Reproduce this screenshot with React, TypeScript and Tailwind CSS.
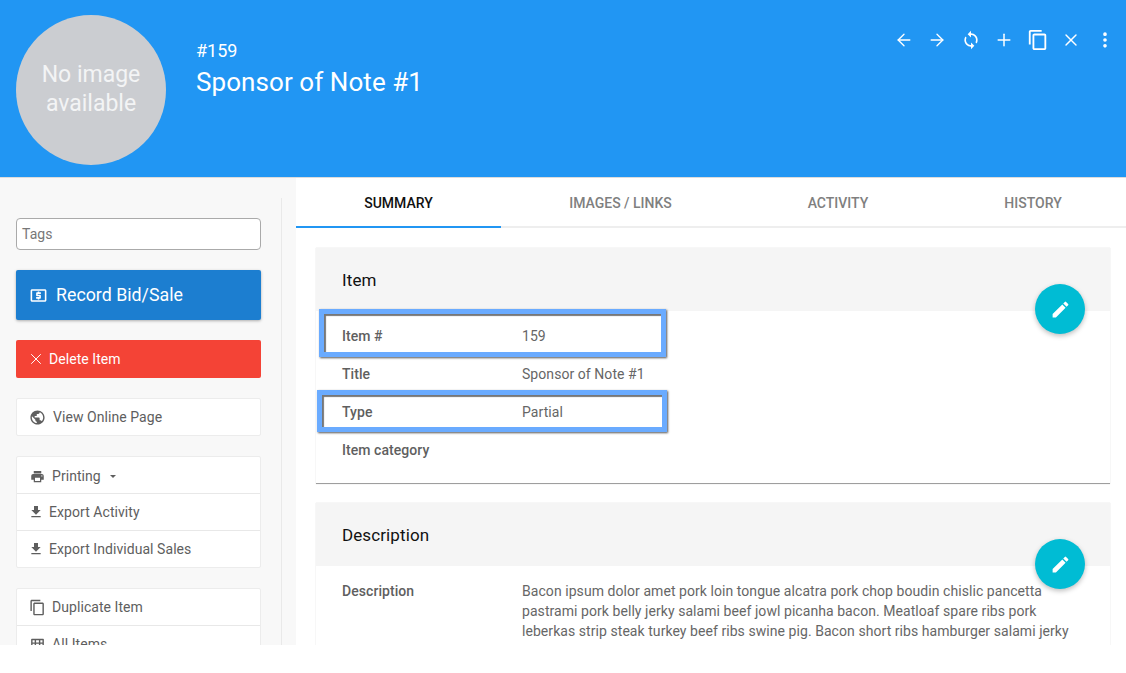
import React from "react";
import { ArrowLeft, ArrowRight, Plus, X, MoreVertical } from "lucide-react";

const M = ({ d, size = 18, className = "" }: { d: string; size?: number; className?: string }) => (
  <svg width={size} height={size} viewBox="0 0 24 24" fill="currentColor" className={className}><path d={d} /></svg>
);
const PENCIL = "M3 17.25V21h3.75L17.81 9.94l-3.75-3.75L3 17.25zM20.71 7.04a1 1 0 0 0 0-1.41l-2.34-2.34a1 1 0 0 0-1.41 0l-1.83 1.83 3.75 3.75 1.83-1.83z";
const COPY = "M16 1H4c-1.1 0-2 .9-2 2v14h2V3h12V1zm3 4H8c-1.1 0-2 .9-2 2v14c0 1.1.9 2 2 2h11c1.1 0 2-.9 2-2V7c0-1.1-.9-2-2-2zm0 16H8V7h11v14z";
const DOWNLOAD = "M19 9h-4V3H9v6H5l7 7 7-7zM5 18v2h14v-2H5z";
const PRINT = "M19 8H5c-1.66 0-3 1.34-3 3v6h4v4h12v-4h4v-6c0-1.66-1.34-3-3-3zm-3 11H8v-5h8v5zm3-7c-.55 0-1-.45-1-1s.45-1 1-1 1 .45 1 1-.45 1-1 1zm-1-9H6v4h12V3z";
const SYNC = "M12 4V1L8 5l4 4V6c3.31 0 6 2.69 6 6 0 1.01-.25 1.97-.7 2.8l1.46 1.46C19.54 15.03 20 13.57 20 12c0-4.42-3.58-8-8-8zm0 14c-3.31 0-6-2.69-6-6 0-1.01.25-1.97.7-2.8L5.24 7.74C4.46 8.97 4 10.43 4 12c0 4.42 3.58 8 8 8v3l4-4-4-4v3z";
const MONEY = "M20 4H4c-1.11 0-2 .89-2 2v12c0 1.11.89 2 2 2h16c1.11 0 2-.89 2-2V6c0-1.11-.89-2-2-2zm0 14H4V6h16v12zM11 17h2v-1h1c.55 0 1-.45 1-1v-3c0-.55-.45-1-1-1h-3v-1h4V8h-2V7h-2v1h-1c-.55 0-1 .45-1 1v3c0 .55.45 1 1 1h3v1H9v2h2v1z";
const GRID = "M4 4h16a1 1 0 0 1 1 1v14a1 1 0 0 1-1 1H4a1 1 0 0 1-1-1V5a1 1 0 0 1 1-1zm1 2v3h3V6H5zm5 0v3h4V6h-4zm6 0v3h3V6h-3zM5 11v7h3v-7H5zm5 0v7h4v-7h-4zm6 0v7h3v-7h-3z";
const EARTH = "M12 2C6.48 2 2 6.48 2 12s4.48 10 10 10 10-4.48 10-10S17.52 2 12 2zm-1 17.93c-3.95-.49-7-3.85-7-7.93 0-.62.08-1.21.21-1.79L9 15v1c0 1.1.9 2 2 2v1.93zm6.9-2.54c-.26-.81-1-1.39-1.9-1.39h-1v-3c0-.55-.45-1-1-1H8v-2h2c.55 0 1-.45 1-1V7h2c1.1 0 2-.9 2-2v-.41c2.93 1.19 5 4.06 5 7.41 0 2.08-.8 3.97-2.1 5.39z";

function Row({ label, value }: { label: string; value?: string }) {
  return (
    <div className="flex h-[38px] items-center pl-[26px] text-[14px] tracking-[0.06px]">
      <div className="w-[180px] font-medium text-[#5f5f5f]">{label}</div>
      <div className="text-[#666]">{value}</div>
    </div>
  );
}

function Fab({ top }: { top: string }) {
  return (
    <div className={`absolute right-[41px] flex h-[50px] w-[50px] items-center justify-center rounded-full bg-[#00bcd4] text-white shadow-[0_2px_5px_rgba(0,0,0,0.26)] ${top}`}>
      <M d={PENCIL} size={21} />
    </div>
  );
}

function MenuRow({ icon, label, cls }: { icon: React.ReactNode; label: string; cls: string }) {
  return (
    <div className={`flex items-center text-[14px] tracking-[0.06px] text-[#5e5e5e] ${cls}`}>
      {icon}
      <span>{label}</span>
    </div>
  );
}

const Highlight = ({ cls }: { cls: string }) => (
  <div className={`pointer-events-none absolute border-[5px] border-[#6aabff] shadow-[1px_1px_2px_#555,inset_2px_2px_1px_#777] ${cls}`} />
);

export default function App() {
  return (
    <div className="relative h-[673px] w-[1126px] overflow-hidden bg-white font-['Roboto',sans-serif]">
      <div className="h-[645px] overflow-hidden">
        <header className="flex h-[178px] border-b border-[#dcdcdc] bg-[#2196f3] text-white">
          <div className="ml-4 mt-[15px] flex h-[150px] w-[150px] flex-col items-center justify-center rounded-full bg-[#cbcdd1] pb-[3px] text-center text-[23px] leading-[29px] text-[#f3f4f5]">
            <span>No image</span>
            <span>available</span>
          </div>
          <div className="ml-[30px] mt-[39px]">
            <div className="text-[18px] leading-[24px]">#159</div>
            <div className="mt-[3px] text-[26px] leading-[32px] tracking-[0.07px]">Sponsor of Note #1</div>
          </div>
          <div className="ml-auto mr-[11px] mt-[29px] flex h-[22px] items-center gap-[13px]">
            <ArrowLeft size={20} strokeWidth={1.6} className="-ml-px" />
            <ArrowRight size={20} strokeWidth={1.6} />
            <M d={SYNC} size={20} className="ml-px" />
            <Plus size={20} strokeWidth={1.8} />
            <M d={COPY} size={22} />
            <X size={20} strokeWidth={1.7} className="-ml-px" />
            <MoreVertical size={20} strokeWidth={2.4} className="ml-px" />
          </div>
        </header>

        <div className="flex h-[467px]">
          <aside className="flex w-[296px] shrink-0 bg-[#f8f8f8] pl-4 pt-[40px]">
            <div className="w-[245px] shrink-0">
              <div className="flex h-[32px] items-center rounded-[4px] border border-[#aaa] bg-white pl-[5px] text-[14px] tracking-[0.06px] text-[#777]">Tags</div>
              <div className="mt-5 flex h-[50px] items-center gap-[8px] rounded-[2px] bg-[#1c7ed0] pl-[13px] text-[17.8px] text-white shadow-[0_1px_3px_rgba(0,0,0,0.3)]">
                <M d={MONEY} size={19} />
                <span>Record Bid/Sale</span>
              </div>
              <div className="mt-5 flex h-[38px] items-center gap-[4px] rounded-[2px] bg-[#f44336] pl-[11px] text-[14px] tracking-[0.06px] text-white">
                <X size={18} strokeWidth={1.3} />
                <span>Delete Item</span>
              </div>
              <div className="mt-5 flex h-[38px] items-center gap-[7px] rounded-[2px] border border-[#ececec] bg-white pl-[12px] text-[14px] tracking-[0.06px] text-[#5e5e5e]">
                <M d={EARTH} size={17} />
                <span>View Online Page</span>
              </div>
              <div className="mt-5 rounded-[2px] border border-[#ececec] bg-white">
                <div className="flex h-[37px] items-center gap-[7px] border-b border-[#e8e8e8] pl-[13px] pt-[2px] text-[14px] tracking-[0.06px] text-[#5e5e5e]">
                  <M d={PRINT} size={15} />
                  <span>Printing</span>
                  <span className="ml-[2px] h-0 w-0 border-x-[3.5px] border-t-[3.5px] border-x-transparent border-t-[#5e5e5e]" />
                </div>
                <MenuRow icon={<M d={DOWNLOAD} size={16} />} label="Export Activity" cls="h-[37px] gap-[5px] border-b border-[#e8e8e8] pl-[11px]" />
                <MenuRow icon={<M d={DOWNLOAD} size={16} />} label="Export Individual Sales" cls="h-[36px] gap-[5px] pl-[11px]" />
              </div>
              <div className="mt-5 rounded-[2px] border border-[#ececec] bg-white">
                <MenuRow icon={<M d={COPY} size={17} />} label="Duplicate Item" cls="h-[37px] gap-[6px] border-b border-[#e8e8e8] pl-[12px]" />
                <MenuRow icon={<M d={GRID} size={17} />} label="All Items" cls="h-[37px] gap-[6px] pl-[12px]" />
              </div>
            </div>
            <div className="ml-[20px] -mt-[20px] h-[500px] w-px bg-[#e9e9e9]" />
          </aside>

          <main className="relative min-w-0 flex-1">
            <nav className="flex h-[50px] items-stretch border-b-2 border-[#eeeeee] text-[14px] font-medium text-[#7f7f7f]">
              <div className="relative flex w-[205px] items-center justify-center pt-[2px] text-[#111]">
                SUMMARY
                <div className="absolute -bottom-[2px] left-0 right-0 h-[2px] bg-[#2196f3]" />
              </div>
              <div className="flex w-[239px] items-center justify-center pt-[2px]">IMAGES / LINKS</div>
              <div className="flex w-[196px] items-center justify-center pt-[2px]">ACTIVITY</div>
              <div className="flex w-[190px] items-center justify-center pl-1 pt-[2px]">HISTORY</div>
            </nav>

            <section className="relative ml-5 mr-4 mt-5 h-[236px] border-b border-[#9e9e9e] shadow-[0_0_1px_rgba(0,0,0,0.2)]">
              <div className="flex h-[63px] items-center bg-[#f5f5f5] pl-[26px] pt-[2px] text-[17px] tracking-[0.1px] text-[#111]">Item</div>
              <div className="pt-[6px]">
                <Row label="Item #" value="159" />
                <Row label="Title" value="Sponsor of Note #1" />
                <Row label="Type" value="Partial" />
                <Row label="Item category" />
              </div>
            </section>

            <section className="relative ml-5 mr-4 mt-[19px] h-[200px] shadow-[0_0_1px_rgba(0,0,0,0.2)]">
              <div className="flex h-[63px] items-center bg-[#f5f5f5] pl-[26px] pt-[2px] text-[17px] tracking-[0.1px] text-[#111]">Description</div>
              <div className="flex pl-[26px] pt-[15px] text-[14px] leading-[20px] tracking-[0.06px]">
                <div className="w-[180px] shrink-0 font-medium text-[#5f5f5f]">Description</div>
                <div className="w-[565px] text-[#666]">
                  Bacon ipsum dolor amet pork loin tongue alcatra pork chop boudin chislic pancetta pastrami pork belly jerky salami beef jowl picanha bacon. Meatloaf spare ribs pork leberkas strip steak turkey beef ribs swine pig. Bacon short ribs hamburger salami jerky sausage kevin meatball ground round pastrami tri-tip andouille shank venison capicola.
                </div>
              </div>
            </section>

            <Fab top="top-[106px]" />
            <Fab top="top-[361px]" />
            <Highlight cls="left-[23px] top-[131px] h-[48px] w-[347px]" />
            <Highlight cls="left-[21px] top-[212px] h-[42px] w-[350px]" />
          </main>
        </div>
      </div>
    </div>
  );
}
